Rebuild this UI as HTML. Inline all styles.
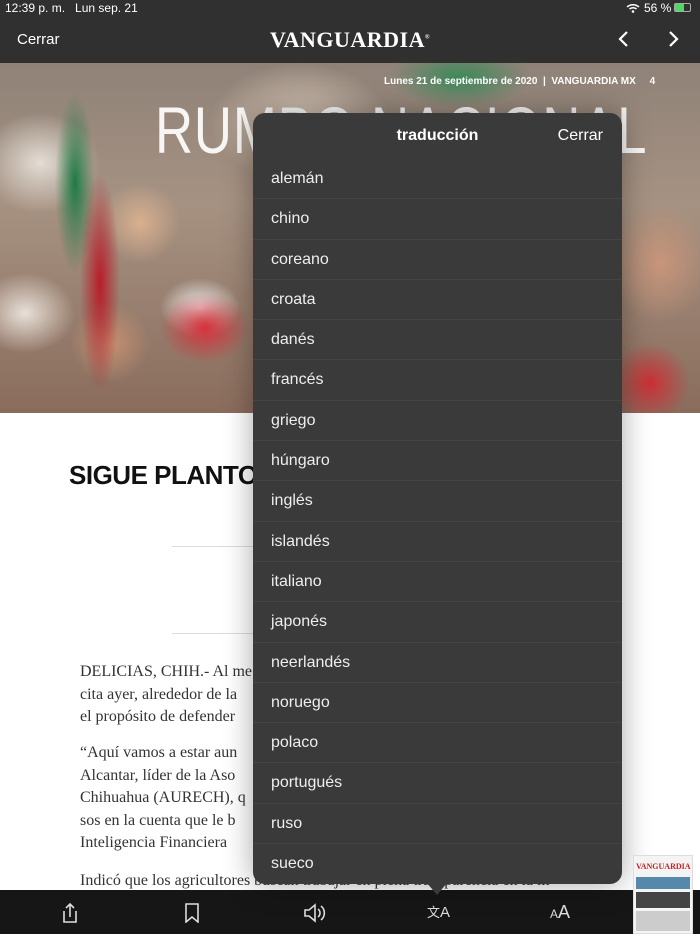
<!DOCTYPE html>
<html><head><meta charset="utf-8"><style>
*{margin:0;padding:0;box-sizing:border-box}
body{width:700px;height:934px;overflow:hidden;background:#fff;font-family:"Liberation Sans",sans-serif;position:relative}
.top{position:absolute;left:0;top:0;width:700px;height:63px;background:#303030;color:#fff;z-index:3}
.status{position:absolute;top:1px;font-size:12px;color:#fff}
.photo{position:absolute;left:0;top:63px;width:700px;height:350px;overflow:hidden;
background:
radial-gradient(ellipse 20px 110px at 100px 220px,#b81d2a 0,transparent 100%),
radial-gradient(ellipse 20px 90px at 75px 120px,#1e7a44 0,transparent 100%),
radial-gradient(ellipse 45px 35px at 205px 265px,#d6303a 0,transparent 100%),
radial-gradient(ellipse 40px 30px at 200px 245px,#eee 0,transparent 100%),
radial-gradient(ellipse 50px 40px at 25px 250px,#e8e0d8 0,transparent 100%),
radial-gradient(ellipse 40px 40px at 140px 160px,#d9b08f 0,transparent 100%),
radial-gradient(ellipse 40px 40px at 110px 280px,#c49070 0,transparent 100%),
radial-gradient(ellipse 50px 60px at 660px 200px,#c8957a 0,transparent 100%),
radial-gradient(ellipse 40px 40px at 650px 320px,#cc2f35 0,transparent 100%),
radial-gradient(ellipse 70px 30px at 460px 15px,#3a8a58 0,transparent 100%),
radial-gradient(ellipse 90px 60px at 300px 60px,#d8c8b8 0,transparent 100%),
radial-gradient(ellipse 60px 50px at 40px 100px,#e4ddd5 0,transparent 100%),
linear-gradient(180deg,#8f8278 0,#a69282 40%,#8a6c5c 100%)}
.rumbo{position:absolute;top:29px;left:155px;font-size:66px;color:rgba(255,255,255,.92);letter-spacing:1px;white-space:nowrap;transform:scaleX(.8);transform-origin:left}
.date{position:absolute;top:76px;left:384px;font-size:10px;color:#fff;font-weight:bold;z-index:1;white-space:nowrap}
h1{position:absolute;top:460px;left:69px;font-size:26px;font-weight:900;color:#111;letter-spacing:-.5px}
.rule{position:absolute;left:172px;width:100px;height:1px;background:#ddd}
.body{position:absolute;left:80px;font-family:"Liberation Serif",serif;font-size:16px;color:#333;line-height:22.5px;white-space:nowrap;max-width:620px;overflow:hidden}
.pop{position:absolute;left:253px;top:113px;width:369px;height:771px;background:#3a3a3a;border-radius:12px;z-index:5;box-shadow:0 0 30px rgba(0,0,0,.35)}
.pop .hd{height:46px;position:relative;color:#fff;font-size:16px}
.pop .hd b{position:absolute;left:0;right:0;top:14px;text-align:center;font-weight:bold}
.pop .hd span{position:absolute;right:19px;top:14px}
.row{height:40.3px;padding-left:18px;color:#eee;font-size:16px;line-height:40px;border-bottom:1px solid #444}
.arrow{position:absolute;left:427px;top:883px;width:0;height:0;border-left:10px solid transparent;border-right:10px solid transparent;border-top:12px solid #3a3a3a;z-index:5}
.bot{position:absolute;left:0;top:890px;width:700px;height:44px;background:#161616;z-index:4}
.thumb{position:absolute;left:633px;top:855px;width:60px;height:79px;background:#f4f4f4;z-index:6;border:1px solid #ddd;overflow:hidden}
</style></head><body>
<div class="top">
<div class="status" style="left:5px">12:39 p. m.&nbsp;&nbsp;&nbsp;Lun sep. 21</div>
<div class="status" style="left:644px">56 %</div>
<svg style="position:absolute;left:626px;top:3px" width="14" height="10" viewBox="0 0 14 10"><path d="M1 4a9 9 0 0 1 12 0M3.5 6a5.5 5.5 0 0 1 7 0" stroke="#fff" stroke-width="1.5" fill="none"/><circle cx="7" cy="8.5" r="1.3" fill="#fff"/></svg>
<div style="position:absolute;left:674px;top:3px;width:17px;height:9px;border:1px solid #aaa;border-radius:2px"><div style="width:9px;height:100%;background:#4cd964"></div></div>
<div style="position:absolute;left:17px;top:31px;font-size:15px">Cerrar</div>
<div style="position:absolute;left:0;right:0;top:27px;text-align:center;font-family:'Liberation Serif',serif;font-weight:bold;font-size:22px;letter-spacing:.5px">VANGUARDIA<sup style="font-size:6px">®</sup></div>
<svg style="position:absolute;left:615px;top:30px" width="70" height="18"><path d="M12 2 5 9l7 7M55 2l7 7-7 7" stroke="#fff" stroke-width="2.2" fill="none"/></svg>
</div>
<div class="photo"><div class="rumbo">RUMBO NACIONAL</div></div>
<div class="date">Lunes 21 de septiembre de 2020 &nbsp;|&nbsp; VANGUARDIA MX &nbsp;&nbsp;&nbsp; 4</div>
<h1>SIGUE PLANTON</h1>
<div class="rule" style="top:546px"></div><div class="rule" style="top:633px"></div>
<div class="body" style="top:661px">DELICIAS, CHIH.- Al me<br>cita ayer, alrededor de la<br>el propósito de defender</div>
<div class="body" style="top:742px">“Aquí vamos a estar aun<br>Alcantar, líder de la Aso<br>Chihuahua (AURECH), q<br>sos en la cuenta que le b<br>Inteligencia Financiera</div>
<div class="body" style="top:870px">Indicó que los agricultores buscan trabajar en plena transparencia en la m</div>
<div class="pop"><div class="hd"><b>traducción</b><span>Cerrar</span></div>
<div class="row">alemán</div><div class="row">chino</div><div class="row">coreano</div><div class="row">croata</div><div class="row">danés</div><div class="row">francés</div><div class="row">griego</div><div class="row">húngaro</div><div class="row">inglés</div><div class="row">islandés</div><div class="row">italiano</div><div class="row">japonés</div><div class="row">neerlandés</div><div class="row">noruego</div><div class="row">polaco</div><div class="row">portugués</div><div class="row">ruso</div><div class="row" style="border:none">sueco</div>
</div>
<div class="arrow"></div>
<div class="bot">
<svg style="position:absolute;left:60px;top:12px" width="20" height="22"><path d="M4 9v11h12V9M10 15V2M6 6l4-4 4 4" stroke="#ddd" stroke-width="1.6" fill="none"/></svg>
<svg style="position:absolute;left:183px;top:13px" width="18" height="20"><path d="M3 1h12v18l-6-5-6 5z" stroke="#ddd" stroke-width="1.6" fill="none"/></svg>
<svg style="position:absolute;left:303px;top:13px" width="24" height="20"><path d="M2 7h4l6-5v16l-6-5H2zM15 6a5 5 0 0 1 0 8M18 3a9 9 0 0 1 0 14" stroke="#ddd" stroke-width="1.6" fill="none"/></svg>
<div style="position:absolute;left:427px;top:12px;color:#ddd;font-size:13px">文<span style="font-size:15px">A</span></div>
<div style="position:absolute;left:550px;top:12px;color:#ddd"><span style="font-size:12px">A</span><span style="font-size:18px">A</span></div>
</div>
<div class="thumb"><div style="color:#c22;font-family:'Liberation Serif',serif;font-weight:bold;font-size:8px;margin:6px 2px">VANGUARDIA</div><div style="height:12px;background:#58a;margin:0 2px"></div><div style="height:16px;background:#444;margin:3px 2px"></div><div style="height:20px;background:#ccc;margin:0 2px"></div></div>
</body></html>
